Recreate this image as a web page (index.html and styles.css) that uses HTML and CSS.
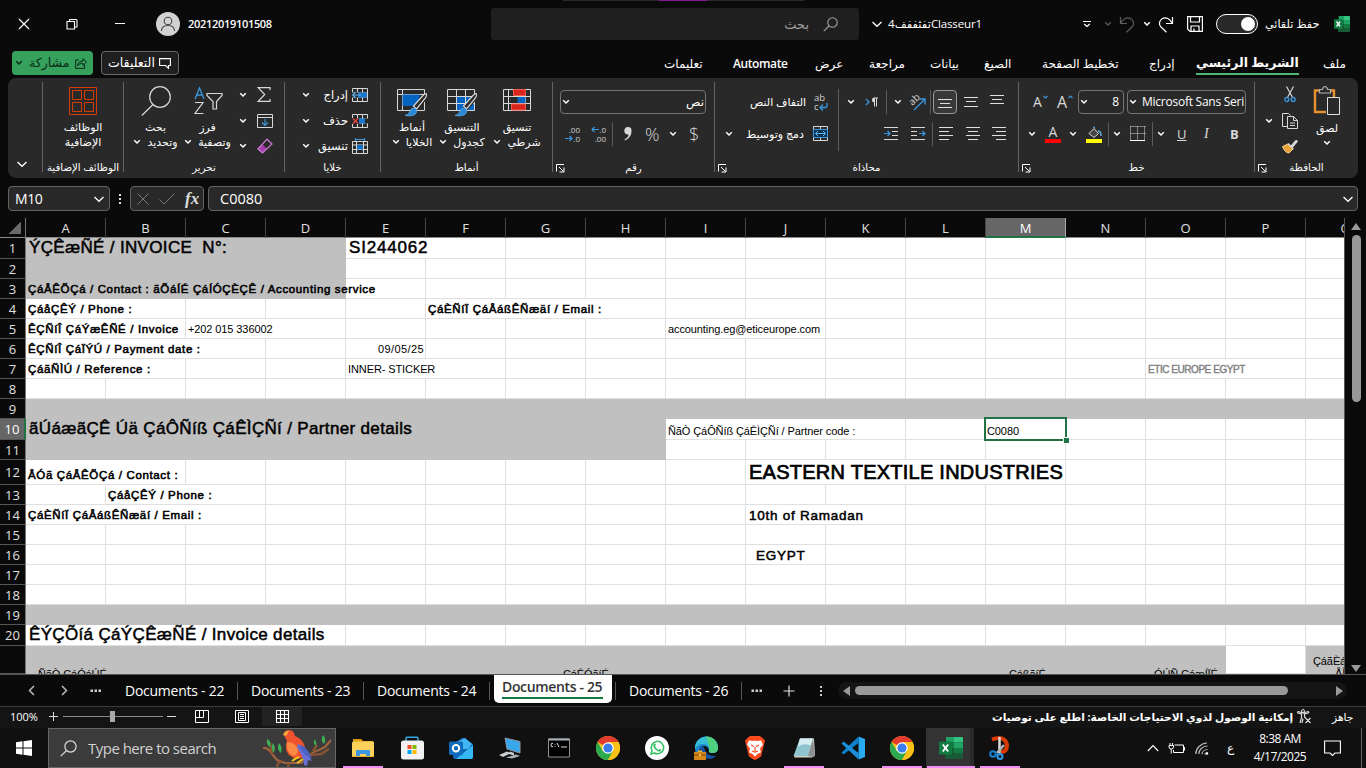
FILE: index.html
```html
<!DOCTYPE html>
<html lang="ar">
<head>
<meta charset="utf-8">
<title>Classeur1</title>
<link rel="stylesheet" href="styles.css">
</head>
<body>
<svg class="defs" width="0" height="0">
  <symbol id="chev" viewBox="0 0 8 6"><path d="M1.2 1.3 4 4 6.800 1.300" fill="none" stroke="currentColor" stroke-width="1.5"/></symbol>
  <symbol id="chevL" viewBox="0 0 12 8"><path d="M1.500 2 6 6.300 10.500 2" fill="none" stroke="currentColor" stroke-width="1.300"/></symbol>
  <symbol id="launch" viewBox="0 0 9 9"><path d="M.5 7.500V.5H8M3 3l4.500 4.500M8 3.500V8H3.500" fill="none" stroke="#fff"/></symbol>
  <symbol id="chrome" viewBox="0 0 24 24"><circle cx="12" cy="12" r="12" fill="#fbc116"/><path d="M12 12 1.600 6A12 12 0 0 1 22.400 6H12z" fill="#e33b2e"/><path d="M1.600 6 6.800 15 12 12 17.200 15 12 24A12 12 0 0 1 1.600 6z" fill="#2da94f"/><path d="M12 6H22.400A12 12 0 0 1 12 24L17.200 15z" fill="#fbc116"/><circle cx="12" cy="12" r="5.800" fill="#fff"/><circle cx="12" cy="12" r="4.600" fill="#3b7ded"/></symbol>
  <symbol id="xl" viewBox="0 0 24 22"><path d="M7 0h9v5.500H7z" fill="#21a366"/><path d="M15 0h8q1 0 1 1v4.500h-9z" fill="#33c481"/><path d="M6 5.500h9V11H6z" fill="#107c41"/><path d="M15 5.500h9V11h-9z" fill="#21a366"/><path d="M6 11h9v5.500H6z" fill="#185c37"/><path d="M15 11h9v5.500h-9z" fill="#107c41"/><path d="M6 16.500h18V21q0 1-1 1H7q-1 0-1-1z" fill="#185c37"/><rect y="4.500" width="13" height="13" rx="1" fill="#107c41"/><path d="M3.800 7.500 9.200 14.500M9.200 7.500 3.800 14.500" stroke="#fff" stroke-width="1.900"/></symbol>
  <symbol id="grid5" viewBox="0 0 16 14"><path d="M.5.5h15v13H.5zM.5 5h15M.5 9h15M5.500.5v13M10.500.5v13" fill="none" stroke="#d8d8d8"/></symbol>
  <symbol id="brush" viewBox="0 0 30 32"><path d="M29 11.500 17.500 24.500" stroke="#292929" stroke-width="5"/><path d="M29 8.500q1.500 1.500-1 5L19.500 24 16.500 21 26 10.500q2-2 3-2z" fill="#292929" stroke="#d8d8d8" stroke-width="1.200"/><path d="M8 30.500q4-.5 5-4.500 1-3.500 4.500-3 3 1.500 2 4.500-2 4.500-11.500 3z" fill="#2b88d8" stroke="#5aa9e6" stroke-width=".8"/></symbol>
</svg>

<header class="titlebar">
  <div class="title-strip"></div>
  <svg width="12" height="12" viewBox="0 0 12 12"><path d="M1 1l10 10M11 1 1 11" stroke="#fff" stroke-width="1.100"/></svg>
  <svg width="12" height="12" viewBox="0 0 12 12"><path d="M1 3.500h7.500V11H1zM3.500 3V1.500h6.500q1 0 1 1V9H9" fill="none" stroke="#fff" stroke-width="1.100"/></svg>
  <svg width="12" height="12" viewBox="0 0 12 12"><path d="M1 5.500h10" stroke="#fff"/></svg>
  <svg width="24" height="24" viewBox="0 0 24 24"><circle cx="12" cy="12" r="12" fill="#d2d2d2"/><circle cx="12" cy="9" r="3.800" fill="none" stroke="#444" stroke-width="1.100"/><path d="M5.500 19q0-5.500 6.500-5.500T18.500 19" fill="none" stroke="#444" stroke-width="1.100"/></svg>
  <span class="user">20212019101508</span>
  <div class="search"><span dir="rtl">بحث</span><svg width="15" height="15" viewBox="0 0 15 15"><circle cx="9.500" cy="5.500" r="4.700" fill="none" stroke="#a0a0a0" stroke-width="1.100"/><path d="M6 9 .8 14.200" stroke="#a0a0a0" stroke-width="1.100"/></svg></div>
  <svg width="12" height="8"><use href="#chevL"/></svg>
  <span class="doc" dir="rtl">Classeur1تفثففف4</span>
  <svg width="8" height="8" viewBox="0 0 8 8"><path d="M0 1.500h8" stroke="#fff"/><path d="M1.200 4 4 6.500 6.800 4" fill="none" stroke="#fff" stroke-width="1.300"/></svg>
  <svg class="dim" width="8" height="6"><use href="#chev"/></svg>
  <svg width="16" height="17" viewBox="0 0 16 17"><path d="M1.500 1v6.500H8M1.700 7.200C4 3 8 .5 11.500 2.500s4 6 1.500 8.500L7.500 16.300" fill="none" stroke="#5c5c5c" stroke-width="1.200"/></svg>
  <svg width="8" height="6"><use href="#chev"/></svg>
  <svg width="16" height="17" viewBox="0 0 16 17"><path d="M14.500 1v6.500H8M14.300 7.200C12 3 8 .5 4.500 2.500s-4 6-1.500 8.500l5.500 5.300" fill="none" stroke="#fff" stroke-width="1.200"/></svg>
  <svg width="16" height="16" viewBox="0 0 16 16"><path d="M.6.6h14.800v14.800H3L.6 13zM3.500.6v5.400h9V.6M4 15v-5h8v5M7 12.500v3" fill="none" stroke="#fff" stroke-width="1.200"/></svg>
  <span class="toggle"><b></b></span>
  <span class="autosave" dir="rtl">حفظ تلقائي</span>
  <svg width="16" height="16" viewBox="0 0 24 22" preserveAspectRatio="none"><use href="#xl" width="24" height="22"/></svg>
</header>

<nav class="tabs">
  <span class="share"><svg width="8" height="6"><use href="#chev"/></svg><span dir="rtl">مشاركة</span><svg width="12" height="11" viewBox="0 0 12 11"><path d="M4 2H.6v8.400h9V7M2.500 8C3 4.500 5 3 8 3V.7l3.400 3.500L8 7.500V5.300C5.500 5.300 4 6 2.500 8z" fill="none" stroke="#0b2a18"/></svg></span>
  <span class="comments"><span dir="rtl">التعليقات</span><svg width="12" height="11" viewBox="0 0 12 11"><path d="M.6.6h10.800v6.900H9.500v2.700L6.500 7.500H.6z" fill="none" stroke="#fff" stroke-width="1.100"/></svg></span>
  <a dir="rtl">تعليمات</a><a class="latin">Automate</a><a dir="rtl">عرض</a><a dir="rtl">مراجعة</a><a dir="rtl">بيانات</a><a dir="rtl">الصيغ</a><a dir="rtl">تخطيط الصفحة</a><a dir="rtl">إدراج</a><a class="on" dir="rtl">الشريط الرئيسي</a><a dir="rtl">ملف</a>
</nav>

<section class="ribbon">
  <div class="group g-collapse"><svg width="12" height="8"><use href="#chevL"/></svg></div>

  <div class="group g-addins">
    <div class="tall">
      <svg width="28" height="32" viewBox="0 0 28 32"><path d="M.5 2.500h27v27H.5zM3.500 5.500h9v9h-9zM15.500 5.500h9v9h-9zM3.500 17.500h9v9h-9zM15.500 17.500h9v9h-9z" fill="none" stroke="#d83b01"/></svg>
      <span dir="rtl">الوظائف</span><span dir="rtl">الإضافية</span>
    </div>
    <div class="label" dir="rtl">الوظائف الإضافية</div>
  </div>

  <div class="group g-edit">
    <div class="body">
      <div class="tall">
        <svg width="30" height="32" viewBox="0 0 30 32"><circle cx="19" cy="12" r="10.300" fill="none" stroke="#d8d8d8" stroke-width="1.200"/><path d="M12 19.500.8 30.500" stroke="#d8d8d8" stroke-width="1.200"/></svg>
        <span dir="rtl">بحث</span><span class="menu"><svg width="8" height="6"><use href="#chev"/></svg><b dir="rtl">وتحديد</b></span>
      </div>
      <div class="tall sort">
        <svg width="30" height="32" viewBox="0 0 30 32"><path d="M2 14 6.500 3 11 14M3.500 10h6" fill="none" stroke="#3a96dd" stroke-width="1.300"/><path d="M2 17.500h8L2 28.500h8.500" fill="none" stroke="#d8d8d8" stroke-width="1.200"/><path d="M14 8.500h15v2l-5.500 6v7.500h-3.500v-7.500l-6-6z" fill="none" stroke="#d8d8d8" stroke-width="1.200"/></svg>
        <span dir="rtl">فرز</span><span class="menu"><svg width="8" height="6"><use href="#chev"/></svg><b dir="rtl">وتصفية</b></span>
      </div>
      <div class="three">
        <div><svg width="8" height="6"><use href="#chev"/></svg><svg width="14" height="15" viewBox="0 0 14 15"><path d="M13 3V.7H1.200l6.500 6.800-6.500 6.800H13V12" fill="none" stroke="#d8d8d8" stroke-width="1.200"/></svg></div>
        <div><svg width="8" height="6"><use href="#chev"/></svg><svg width="16" height="14" viewBox="0 0 16 14"><path d="M.5.5h15v13H.5zM.5 3.500h15" fill="none" stroke="#d8d8d8"/><path d="M8 5v6.500M5 8.500l3 3 3-3" fill="none" stroke="#3a96dd" stroke-width="1.200"/></svg></div>
        <div><svg width="8" height="6"><use href="#chev"/></svg><svg width="16" height="16" viewBox="0 0 16 16"><path d="M5.500 6.500 9.500 10.500 5.500 15 .9 11z" fill="#a43cb0"/><path d="M10 1.200 15 6 5.500 15 .9 11z" fill="none" stroke="#c77dd0" stroke-width="1.200"/></svg></div>
      </div>
    </div>
    <div class="label" dir="rtl">تحرير</div>
  </div>

  <div class="group g-cells">
    <div class="body three">
      <div><svg width="8" height="6"><use href="#chev"/></svg><span dir="rtl">إدراج</span><svg width="16" height="14" viewBox="0 0 16 14"><use href="#grid5"/><path d="M5 4.500h10v5H5z" fill="#1878d0"/><path d="M0 4.500h6v5H0z" fill="#292929"/><path d="M9 7H.8M3.500 4 .8 7l2.700 3" fill="none" stroke="#5fb2ec" stroke-width="1.200"/></svg></div>
      <div><svg width="8" height="6"><use href="#chev"/></svg><span dir="rtl">حذف</span><svg width="16" height="14" viewBox="0 0 16 14"><use href="#grid5"/><path d="M0 4h7v6H0zM13 4.500h3v5h-3z" fill="#292929"/><path d="M7 4.500h6v5H7z" fill="#1878d0"/><path d="M1 4.500l5 5M6 4.500l-5 5" stroke="#e8453c" stroke-width="1.300"/></svg></div>
      <div><svg width="8" height="6"><use href="#chev"/></svg><span dir="rtl">تنسيق</span><svg width="16" height="16" viewBox="0 0 16 16"><path d="M.5 3.500h15v12H.5zM.5 7h15M.5 11.500h15M4.500 3.500v12M11.500 3.500v12" fill="none" stroke="#d8d8d8"/><path d="M5 7h6v4.500H5z" fill="#0f6cc4"/><path d="M3.500 1.500h9M3.500 0v3M12.500 0v3" stroke="#3a96dd"/></svg></div>
    </div>
    <div class="label" dir="rtl">خلايا</div>
  </div>

  <div class="group g-styles">
    <div class="body">
      <div class="tall">
        <svg width="30" height="32" viewBox="0 0 30 32"><path d="M.5 4.500h27v21H.5zM.5 9.500h27M5.500 4.500v21" fill="none" stroke="#d8d8d8"/><path d="M5.500 9.500h17V21h-17z" fill="#0563c1"/><use href="#brush" width="30" height="32"/></svg>
        <span dir="rtl">أنماط</span><span class="menu"><svg width="8" height="6"><use href="#chev"/></svg><b dir="rtl">الخلايا</b></span>
      </div>
      <div class="tall t-format">
        <svg width="30" height="32" viewBox="0 0 30 32"><path d="M9.500 11.500h18v14h-18z" fill="#0563c1"/><path d="M.5 4.500h27v21H.5zM.5 11.500h27M.5 18.500h27M9.500 4.500v21M18.500 4.500v21" fill="none" stroke="#d8d8d8"/><use href="#brush" width="30" height="32"/></svg>
        <span dir="rtl">التنسيق</span><span class="menu"><svg width="8" height="6"><use href="#chev"/></svg><b dir="rtl">كجدول</b></span>
      </div>
      <div class="tall t-cond">
        <svg width="28" height="32" viewBox="0 0 28 32"><path d="M.5 4.500h27v21H.5zM.5 11.500h27M.5 18.500h27M5.500 4.500v21M22.500 4.500v21" fill="none" stroke="#d8d8d8"/><path d="M10.500 4.500h12v6h-12zM8.500 19h14v6h-14z" fill="#d9261c" stroke="#f0564c"/><path d="M6 12h8v6H6z" fill="#292929"/><path d="M14.500 12h8v6h-8z" fill="#0563c1"/></svg>
        <span dir="rtl">تنسيق</span><span class="menu"><svg width="8" height="6"><use href="#chev"/></svg><b dir="rtl">شرطي</b></span>
      </div>
    </div>
    <div class="label" dir="rtl">أنماط</div>
  </div>

  <div class="group g-number">
    <div class="body two">
      <div><span class="box num-format"><svg width="8" height="6"><use href="#chev"/></svg><span dir="rtl">نص</span></span></div>
      <div class="r2">
        <span class="dec"><em>.00</em><em class="arr"><svg width="8" height="7" viewBox="0 0 8 7"><path d="M0 3.500h7M4.500 1 7 3.500 4.500 6" fill="none" stroke="#3a96dd" stroke-width="1.200"/></svg>.0</em></span>
        <span class="dec"><em class="arr"><svg width="8" height="7" viewBox="0 0 8 7"><path d="M8 3.500H1M3.500 1 1 3.500 3.500 6" fill="none" stroke="#3a96dd" stroke-width="1.200"/></svg>.0</em><em>.00</em></span>
        <i class="sep"></i>
        <svg width="8" height="14" viewBox="0 0 8 14"><path d="M4 0a3.700 3.700 0 0 1 3.500 4C7.500 9 4.500 12 .8 13.500L.5 12.500C3 11 4.500 9.500 4.500 7.500 2 8 .3 6 .3 4A3.600 3.600 0 0 1 4 0z" fill="#d8d8d8"/></svg>
        <span class="sym">%</span>
        <svg width="8" height="6"><use href="#chev"/></svg>
        <span class="sym">$</span>
      </div>
    </div>
    <div class="label" dir="rtl">رقم</div><svg class="launcher" width="9" height="9"><use href="#launch"/></svg>
  </div>

  <div class="group g-align">
    <div class="body two">
      <div class="r1">
        <span dir="rtl">التفاف النص</span>
        <span class="wrap-ic"><em>ab</em><em>c<svg width="9" height="8" viewBox="0 0 9 8"><path d="M8 0v2.500Q8 4.500 6 4.500H1.500M4 1.500l-3 3 3 3" fill="none" stroke="#3a96dd" stroke-width="1.300"/></svg></em></span>
        <i class="sep long"></i>
        <svg width="8" height="6"><use href="#chev"/></svg>
        <svg width="13" height="10" viewBox="0 0 13 10"><path d="M1 2l3 3-3 3" fill="none" stroke="#3a96dd" stroke-width="1.300"/><path d="M9 1h4M9.500 1v8.500M11.500 1v8.500" fill="none" stroke="#d8d8d8"/><path d="M9.500.5a2.500 2.500 0 0 0 0 5z" fill="#d8d8d8"/></svg>
        <i class="sep"></i>
        <svg width="8" height="6"><use href="#chev"/></svg>
        <span class="orient"><em>ab</em><svg width="13" height="13" viewBox="0 0 13 13"><path d="M1 12 11.500 1.500M6.500 1H12v5.500" fill="none" stroke="#3a96dd" stroke-width="1.300"/></svg></span>
        <i class="sep"></i>
        <span class="sel"><svg width="14" height="14" viewBox="0 0 14 14"><path d="M0 4.500h14M2 8.500h10M0 12.500h14" stroke="#e0e0e0"/></svg></span>
        <svg width="14" height="14" viewBox="0 0 14 14"><path d="M0 2.500h14M2 6.500h10M0 11.500h14" stroke="#e0e0e0"/></svg>
        <svg width="14" height="14" viewBox="0 0 14 14"><path d="M0 .5h14M2 4.500h10M0 8.500h14" stroke="#e0e0e0"/></svg>
      </div>
      <div class="r2">
        <svg width="8" height="6"><use href="#chev"/></svg>
        <span dir="rtl">دمج وتوسيط</span>
        <svg width="16" height="16" viewBox="0 0 16 16"><path d="M.5.5h14v14H.5zM.5 3.500h14M.5 11.500h14M7.500.5v3M7.500 11.500v3" fill="none" stroke="#d8d8d8"/><path d="M.5 3.500h14v8H.5z" fill="#0d3557" stroke="#3a96dd"/><path d="M2.500 7.500h10M5 5 2.500 7.500 5 10M10 5l2.500 2.500L10 10" fill="none" stroke="#5fb2ec"/></svg>
        <svg width="14" height="14" viewBox="0 0 14 14"><path d="M0 .5h14M8 4.500h6M8 8.500h6M0 12.500h14" stroke="#d8d8d8"/><path d="M0 6.500h6M3.500 4 6 6.500 3.500 9" fill="none" stroke="#3a96dd" stroke-width="1.200"/></svg>
        <svg width="14" height="14" viewBox="0 0 14 14"><path d="M0 .5h14M0 4.500h6M0 8.500h6M0 12.500h14" stroke="#d8d8d8"/><path d="M8 6.500h6M11.500 4 14 6.500 11.500 9" fill="none" stroke="#3a96dd" stroke-width="1.200"/></svg>
        <i class="sep"></i>
        <svg width="14" height="14" viewBox="0 0 14 14"><path d="M0 .5h14M0 4.500h10M0 8.500h14M0 12.500h10" stroke="#e0e0e0"/></svg>
        <svg width="14" height="14" viewBox="0 0 14 14"><path d="M0 .5h14M2 4.500h10M0 8.500h14M2 12.500h10" stroke="#e0e0e0"/></svg>
        <svg width="14" height="14" viewBox="0 0 14 14"><path d="M0 .5h14M4 4.500h10M0 8.500h14M4 12.500h10" stroke="#e0e0e0"/></svg>
      </div>
    </div>
    <div class="label" dir="rtl">محاذاة</div><svg class="launcher" width="9" height="9"><use href="#launch"/></svg>
  </div>

  <div class="group g-font">
    <div class="body two">
      <div class="r1">
        <span class="fa sm">A<svg width="5" height="4" viewBox="0 0 5 4"><path d="M.5 1l2 2 2-2" fill="none" stroke="#3a96dd" stroke-width="1.200"/></svg></span>
        <span class="fa">A<svg width="5" height="4" viewBox="0 0 5 4"><path d="M.5 3l2-2 2 2" fill="none" stroke="#3a96dd" stroke-width="1.200"/></svg></span>
        <span class="box"><svg width="8" height="6"><use href="#chev"/></svg><span>8</span></span>
        <span class="box fname"><svg width="8" height="6"><use href="#chev"/></svg><span>Microsoft Sans Seri</span></span>
      </div>
      <div class="r2">
        <svg width="8" height="6"><use href="#chev"/></svg>
        <span class="fcol">A</span>
        <svg width="8" height="6"><use href="#chev"/></svg>
        <svg width="17" height="17" viewBox="0 0 17 17"><path d="M3 7.500 8 2.500l4.500 5L8 11.500z" fill="#444" stroke="#d8d8d8"/><path d="M8 2.500V.5M12 5q3 0 3 5" fill="none" stroke="#5fa8dc" stroke-width="1.600"/><path d="M0 13h16v4H0z" fill="#ff0"/></svg>
        <i class="sep"></i>
        <svg width="8" height="6"><use href="#chev"/></svg>
        <svg width="16" height="16" viewBox="0 0 16 16"><path d="M.5.5h15M.5 7.500h15M.5.5v14M7.500.5v14M14.500.5v14" fill="none" stroke="#d8d8d8" stroke-dasharray="1 1"/><path d="M0 14.500h15" stroke="#fff"/></svg>
        <i class="sep"></i>
        <svg width="8" height="6"><use href="#chev"/></svg>
        <span class="fmt un">U</span><span class="fmt it">I</span><span class="fmt bo">B</span>
      </div>
    </div>
    <div class="label" dir="rtl">خط</div><svg class="launcher" width="9" height="9"><use href="#launch"/></svg>
  </div>

  <div class="group g-clip">
    <div class="body">
      <div class="three">
        <div><svg class="cut" width="12" height="17" viewBox="0 0 12 17"><path d="M2.500.5 8.300 11M9.500.5 3.700 11" stroke="#d8d8d8" stroke-width="1.200"/><circle cx="2.800" cy="13.500" r="2" fill="none" stroke="#3a96dd" stroke-width="1.300"/><circle cx="9.200" cy="13.500" r="2" fill="none" stroke="#3a96dd" stroke-width="1.300"/></svg></div>
        <div><svg width="8" height="6"><use href="#chev"/></svg><svg width="16" height="16" viewBox="0 0 16 16"><path d="M5.500 13.500h-5V.5h6l2 2M5.500 3.500h6l4 4v8h-10zM11.500 3.500v4h4M8 10h5M8 12.500h5" fill="none" stroke="#d8d8d8"/></svg></div>
        <div><svg width="16" height="16" viewBox="0 0 16 16"><path d="M.5 8.500 6 6l5 5-4 4q-4 0-6.500-6.500z" fill="#e8a33a" stroke="#f5d08a"/><path d="M6 5.500l5.500 5.500M9 8.500l4.500-5.500q1.500-1 1.500 0.500L10 9.500" fill="none" stroke="#d8d8d8" stroke-width="1.400"/></svg></div>
      </div>
      <div class="tall">
        <svg width="28" height="32" viewBox="0 0 28 32"><path d="M7 5.500H2v21.500h11M17 5.500h4V12" fill="none" stroke="#e8912d" stroke-width="2.400"/><path d="M6.500 8V4.500h3q.5-3 2.500-3t2.500 3h3V8z" fill="#292929" stroke="#b0b0b0" stroke-width="1.200"/><path d="M14.500 12.500h12v17h-12z" fill="#292929" stroke="#e0e0e0"/></svg>
        <span dir="rtl">لصق</span><svg width="8" height="6"><use href="#chev"/></svg>
      </div>
    </div>
    <div class="label" dir="rtl">الحافظة</div><svg class="launcher" width="9" height="9"><use href="#launch"/></svg>
  </div>
</section>

<section class="formula">
  <div class="fbox name"><span>M10</span><svg width="12" height="8"><use href="#chevL"/></svg></div>
  <svg class="dots" width="4" height="12" viewBox="0 0 4 12"><path d="M1 1h2v2H1zM1 5h2v2H1zM1 9h2v2H1z" fill="#ddd"/></svg>
  <div class="fbox tools"><svg width="12" height="12" viewBox="0 0 12 12"><path d="M.5.5l11 11M11.500.5l-11 11" stroke="#777"/></svg><svg width="16" height="12" viewBox="0 0 16 12"><path d="M.5 6.500 5 11 15.500.5" fill="none" stroke="#777"/></svg><span>fx</span></div>
  <div class="fbox value"><span>C0080</span><svg width="12" height="8"><use href="#chevL"/></svg></div>
</section>

<main class="work">
  <div class="sheet">
    <div class="cols"><i class="corner"></i><b>A</b><b>B</b><b>C</b><b>D</b><b>E</b><b>F</b><b>G</b><b>H</b><b>I</b><b>J</b><b>K</b><b>L</b><b class="cur">M</b><b>N</b><b>O</b><b>P</b><b>Q</b></div>
    <div class="row h21"><b>1</b><p class="c1-4 grey big t1">ÝÇÊæÑÉ / INVOICE&nbsp; N°:</p><p class="c5-6 big t2">SI244062</p></div>
    <div class="row"><b>2</b><p class="c1-4 grey"></p></div>
    <div class="row"><b>3</b><p class="c1-4 grey bold over">ÇáÅÊÕÇá / Contact : ãÕáÍÉ ÇáÍÓÇÈÇÊ / Accounting service</p></div>
    <div class="row"><b>4</b><p class="c1-2 bold">ÇáåÇÊÝ / Phone :</p><p class="c6-8 bold">ÇáÈÑíÏ ÇáÅáßÊÑæäí / Email :</p></div>
    <div class="row"><b>5</b><p class="c1-2 bold">ÊÇÑíÎ ÇáÝæÊÑÉ / Invoice</p><p class="c3-4">+202 015 336002</p><p class="c9-10">accounting.eg@eticeurope.com</p></div>
    <div class="row"><b>6</b><p class="c1-3 bold">ÊÇÑíÎ ÇáÏÝÚ / Payment date :</p><p class="c5 right">09/05/25</p></div>
    <div class="row"><b>7</b><p class="c1-2 bold">ÇáãÑÌÚ / Reference :</p><p class="c5-6">INNER- STICKER</p><p class="c15-16 etic">ETIC EUROPE EGYPT</p></div>
    <div class="row"><b>8</b></div>
    <div class="row full"><b>9</b></div>
    <div class="row h21"><b class="cur">10</b><p class="c1-8 grey big">ãÚáæãÇÊ Úä ÇáÔÑíß ÇáÊÌÇÑí / Partner details</p><p class="c9-11 code">ÑãÒ ÇáÔÑíß ÇáÊÌÇÑí / Partner code :</p><p class="c13 code active">C0080</p></div>
    <div class="row"><b>11</b><p class="c1-8 grey"></p></div>
    <div class="row h25"><b>12</b><p class="c1-2 bold low">ÅÓã ÇáÅÊÕÇá / Contact :</p><p class="c10-13 huge">EASTERN TEXTILE INDUSTRIES</p></div>
    <div class="row"><b>13</b><p class="c2-3 bold">ÇáåÇÊÝ / Phone :</p></div>
    <div class="row"><b>14</b><p class="c1-3 bold">ÇáÈÑíÏ ÇáÅáßÊÑæäí / Email :</p><p class="c10-11 mid">10th of Ramadan</p></div>
    <div class="row"><b>15</b></div>
    <div class="row"><b>16</b><p class="c10 mid egypt">EGYPT</p></div>
    <div class="row"><b>17</b></div>
    <div class="row"><b>18</b></div>
    <div class="row full"><b>19</b></div>
    <div class="row h21"><b>20</b><p class="c1-4 big">ÊÝÇÕíá ÇáÝÇÊæÑÉ / Invoice details</p></div>
    <div class="row last"><b></b><p class="c1-15 grey heads"><span>ÑãÒ ÇáÓáÚÉ</span><span>ÇáÊÓãíÉ</span><span>ÇáßãíÉ</span><span>ÓÚÑ ÇáæÍÏÉ</span></p><p class="c17 grey qhead"><span>ÇáãÈáÛ</span><span>ÅÌãÇáí</span></p></div>
  </div>
  <div class="vscroll"><i class="up"></i><i class="thumb"></i><i class="down"></i></div>
</main>

<section class="sheets">
  <svg width="7" height="11" viewBox="0 0 7 11"><path d="M6 1 1.500 5.500 6 10" fill="none" stroke="#bbb" stroke-width="1.500"/></svg>
  <svg width="7" height="11" viewBox="0 0 7 11"><path d="M1 1l4.500 4.500L1 10" fill="none" stroke="#bbb" stroke-width="1.500"/></svg>
  <svg width="12" height="4" viewBox="0 0 12 4"><path d="M.5.5h2.500v2.500H.5zM4.500.5H7v2.500H4.500zM8.500.5H11v2.500H8.500z" fill="#ccc"/></svg>
  <span>Documents - 22</span><i></i><span>Documents - 23</span><i></i><span>Documents - 24</span><i></i>
  <span class="active-tab"><u>Documents - 25</u></span><i></i><span>Documents - 26</span><i></i>
  <svg width="12" height="4" viewBox="0 0 12 4"><path d="M.5.5h2.500v2.500H.5zM4.500.5H7v2.500H4.500zM8.500.5H11v2.500H8.500z" fill="#ccc"/></svg>
  <svg width="12" height="12" viewBox="0 0 12 12"><path d="M6 .5v11M.5 6h11" stroke="#ddd" stroke-width="1.200"/></svg>
  <svg width="4" height="12" viewBox="0 0 4 12"><path d="M1 1h2v2H1zM1 5h2v2H1zM1 9h2v2H1z" fill="#ccc"/></svg>
  <div class="hscroll"><i class="left"></i><i class="hthumb"></i><i class="rightarr"></i></div>
</section>

<section class="status">
  <span class="zoomv">100%</span>
  <svg width="9" height="9" viewBox="0 0 9 9"><path d="M4.500 0v9M0 4.500h9" stroke="#ddd"/></svg>
  <span class="slider"><b></b></span>
  <svg width="9" height="9" viewBox="0 0 9 9"><path d="M0 4.500h9" stroke="#ddd"/></svg>
  <svg width="14" height="13" viewBox="0 0 14 13"><path d="M.5.5h13v12H.5zM8.500.5v7M.5 7.500h8M4.500.5v7" fill="none" stroke="#fff"/></svg>
  <svg width="14" height="13" viewBox="0 0 14 13"><path d="M.5.5h13v12H.5zM3.500 2.500h7v8h-7zM5 4.500h4M5 6.500h4M5 8.500h4" fill="none" stroke="#fff"/></svg>
  <span class="view-on"><svg width="13" height="13" viewBox="0 0 13 13"><path d="M.5.5h12v12H.5zM.5 4.500h12M.5 8.500h12M4.500.5v12M8.500.5v12" fill="none" stroke="#fff" stroke-width="1.100"/></svg></span>
  <span class="a11y" dir="rtl">إمكانية الوصول لذوي الاحتياجات الخاصة: اطلع على توصيات</span>
  <svg width="15" height="15" viewBox="0 0 15 15"><circle cx="6" cy="2" r="1.500" fill="none" stroke="#ddd"/><path d="M.8 4 4.500 5v3.500L3 14M11.500 4 7.500 5v3l1.500 1.500M5 14l1-4.500M.8 4q-1-2 2-1L6 4l3.500-1q3-1 2 1M8.500 9l5 5M13.500 9l-5 5" fill="none" stroke="#ddd" stroke-width="1.200"/></svg>
  <span class="ready" dir="rtl">جاهز</span>
</section>

<footer class="taskbar">
  <div class="start"><svg width="16" height="16" viewBox="0 0 16 16"><path d="M0 2.300 6.500 1.300V7.500H0zM7.500 1.200 16 0v7.500H7.500zM0 8.500h6.500v6.200L0 13.700zM7.500 8.500H16V16l-8.500-1.200z" fill="#fff"/></svg></div>
  <div class="tsearch">
    <svg width="17" height="17" viewBox="0 0 17 17"><circle cx="10.500" cy="6.500" r="5.600" fill="none" stroke="#ddd" stroke-width="1.200"/><path d="M6.500 10.500.8 16.200" stroke="#ddd" stroke-width="1.200"/></svg>
    <span>Type here to search</span>
    <svg class="bird" width="70" height="38" viewBox="0 0 70 38"><path d="M0 19q5-1 9 6l5 6 8 3 16 0 8-7q3-4 10-6l6-3 6-7" fill="none" stroke="#a0633f" stroke-width="2.200"/><path d="M14 38q0-4 5-6M26 34l-1 4M46 26l12-1 8-5M9 25 7 14M50 22l4-6" fill="none" stroke="#8a5233" stroke-width="2.400"/><path d="M4 10q5 2 3 8-4-2-3-8zM10 14q3 4 1 10-4-5-1-10zM16 14q4 4 2 10-5-4-2-10zM60 6q4 4 1 9-4-4-1-9zM52 10q2 4 1 7-4-3-1-7z" fill="#3cad52"/><path d="M21 6q0-5 5-5 5 0 6 6 8 3 10 11 1 7-3 11-7 2-13-3-5-6-2-14z" fill="#f0522d"/><path d="M24 13q-2 9 6 14 5 0 5-7-3-7-11-7z" fill="#fb8a44"/><path d="M20 6q1-4 6-4-2 4-3 5z" fill="#fba83e"/><path d="M35 15q7 2 9 8l5 9-4-1-1 6-3-1q0-8-7-17z" fill="#6a6fd4"/><path d="M38 16q6 3 8 8l3 5q-9-2-12-11z" fill="#4a62c4"/><path d="M29 32q4-3 7-4M34 34l6-4" stroke="#f5c518" stroke-width="2"/></svg>
  </div>
  <div class="apps">
    <div class="run"><svg width="24" height="24" viewBox="0 0 24 24"><path d="M2 3h8l2 2h10v4H2z" fill="#e09c12"/><path d="M2 5.500h20q1 0 1 1v14H1v-14z" fill="#fcd15b"/><path d="M5 21v-6q0-1 1-1h12q1 0 1 1v6h-4v-3H9v3z" fill="#3c96e0"/><path d="M1 20.500h22" stroke="#e8ad28"/></svg></div>
    <div><svg width="24" height="24" viewBox="0 0 24 24"><path d="M6 7V2q0-.8 1-.8h10q1 0 1 .8v5" fill="none" stroke="#35a8e8" stroke-width="1.500"/><rect x="1" y="4.500" width="23" height="19" rx="2.500" fill="#f2f2f2"/><path d="M7.500 9h4v4h-4z" fill="#f25022"/><path d="M12.500 9h4v4h-4z" fill="#7fba00"/><path d="M7.500 14h4v4h-4z" fill="#00a4ef"/><path d="M12.500 14h4v4h-4z" fill="#ffb900"/></svg></div>
    <div><svg width="24" height="24" viewBox="0 0 24 24"><path d="M4 8 14 1.500 24 8v13q0 2-2 2H6q-2 0-2-2z" fill="#1266b8"/><path d="M8 6l8-4 7 6-4 5H8z" fill="#42b6f2"/><path d="M24 9v12q0 2-2 2H7z" fill="#35b8f1"/><rect y="5.500" width="14" height="13.500" rx="1.500" fill="#0f6cbd"/><circle cx="7" cy="12.200" r="3.200" fill="none" stroke="#fff" stroke-width="2"/></svg></div>
    <div><svg width="24" height="24" viewBox="0 0 24 24"><path d="M7 2l15 3.500v11.500L9 13z" fill="#39a7ee" stroke="#8a959e"/><path d="M12 15.500l4 1.500v2.500l-5-1.500zM1 19l8-3.500 4 1.500-8 4z" fill="#c9ced2"/><path d="M8 21.500l10-3 4 1.500-8 2.500z" fill="#aeb4b9"/></svg></div>
    <div><svg width="24" height="24" viewBox="0 0 24 24"><path d="M1.500 3h21v18h-21z" fill="#000" stroke="#8c9299"/><path d="M1.500 3.500h21" stroke="#aab0b5" stroke-width="2"/><path d="M6 7.500q-2-1-2 1.500t2 1.500M8 8v.8M8 10v.8M10 7l2 4M14 11h6" fill="none" stroke="#ddd"/></svg></div>
    <div><svg width="24" height="24"><use href="#chrome"/></svg></div>
    <div><svg width="24" height="24" viewBox="0 0 24 24"><circle cx="12" cy="12" r="12" fill="#fff"/><path d="M6 18l1-3.500a6.200 6.200 0 1 1 2.500 2.500z" fill="none" stroke="#2fc160" stroke-width="1.500"/><path d="M9.500 8.500q-1 2 1.500 4.500t4.500 1.500M9 9.500 10.500 8M14 15l1.700-1.500" fill="none" stroke="#2fc160" stroke-width="1.700"/></svg></div>
    <div><svg width="24" height="24" viewBox="0 0 24 24"><path d="M1 12A11.500 11.500 0 0 1 24 12q0 5-6 5-4-.5-3-3-1-4-5-4-5 0-5 6-1 5 4 7-8-2-8-11z" fill="#1e86cc"/><path d="M1 12A11.500 11.500 0 0 1 24 12q0 5-6 5-4-.5-3-3Q15 8 9 8q-5 0-8 5z" fill="#35bdd8"/><path d="M12 .5A11.500 11.500 0 0 1 24 12q0 5-6 5-4-.5-3-3 1-1 0-4z" fill="#57d467" opacity=".8"/><path d="M6 11q-3 11 10 12 4-.5 6-3-10 1-12-9-2-1-4 0z" fill="#1552a0"/><path d="M0 16h12v8H0z" fill="#d3861c"/><path d="M0 19h12" stroke="#7a4a0c"/><path d="M4 16v-1.500h4V16M5 18h2v2.500H5z" fill="#f3b33d"/></svg></div>
    <div><svg width="24" height="24" viewBox="0 0 24 24"><path d="M7 0h10l3 2.500 2 2-1 4-3 12q-4 3-6 3.500-2-.5-6-3.500l-3-12-1-4 2-2z" fill="#fb4a1e"/><path d="M6 4.500l4 .5 2-.5 2 .5 4-.5 2 4-3 4 1 4-3 1-3 3-3-3-3-1 1-4-3-4z" fill="#fff"/><path d="M8 9l3 1.500M16 9l-3 1.500M12 11v4M9 15l3 1 3-1" fill="none" stroke="#fb4a1e" stroke-width="1.200"/></svg></div>
    <div class="run"><svg width="24" height="24" viewBox="0 0 24 24"><path d="M8 2.500h14l1 17-3 2H2z" fill="#d7d2c2"/><path d="M8 2.500h13l-5 17.500H1.500z" fill="#8ec5cf"/><path d="M8 2.500h13l-2 7q-7-3-13 1z" fill="#d6eef2"/><path d="M21 2.500 16 20l5 1 2-1z" fill="#8a8f92"/></svg></div>
    <div><svg width="24" height="24" viewBox="0 0 24 24"><path d="M17.500.5 24 3v18l-6.500 2.500z" fill="#29a9f2"/><path d="M17.500 7 2.500 18.500.5 16.500 17.500.5z" fill="#0f7fcc"/><path d="M17.500 17 2.500 5.500.5 7.500l17 16z" fill="#1a8fdc"/></svg></div>
    <div class="run"><svg width="24" height="24"><use href="#chrome"/></svg></div>
    <div class="run open"><svg width="24" height="22"><use href="#xl"/></svg></div>
    <div class="run"><svg width="24" height="24" viewBox="0 0 24 24"><path d="M4 3.500Q17-1 19 9q0 7-6 7" fill="none" stroke="#d83b01" stroke-width="4"/><path d="M11.500 1v16" stroke="#ddd" stroke-width="2.500"/><path d="M16 9 9 17" stroke="#b5b5b5" stroke-width="2.500"/><circle cx="5" cy="18" r="2.800" fill="none" stroke="#1583d8" stroke-width="2"/><circle cx="12" cy="20.500" r="2.500" fill="none" stroke="#2f9ae8" stroke-width="2"/></svg></div>
  </div>
  <div class="tray">
    <svg width="12" height="8" viewBox="0 0 12 8"><path d="M.8 7 6 1.500 11.200 7" fill="none" stroke="#fff" stroke-width="1.100"/></svg>
    <svg width="17" height="13" viewBox="0 0 17 13"><path d="M6.500 3h9v7.500h-10V8M16.500 5v3.500M1 3.500h4.500V5q0 2-2.200 2T1 5zM2 3.500V1M4.500 3.500V1M3.200 7v4.500" fill="none" stroke="#fff"/></svg>
    <svg width="14" height="13" viewBox="0 0 14 13"><path d="M.8 12A12 11 0 0 1 12 1M3.800 12A9 8 0 0 1 12.500 4M7 12.200A5.500 5 0 0 1 12.500 7.500M9.800 12.500a3 2.500 0 0 1 2.700-2" fill="none" stroke="#bbb" stroke-width="1.200"/><circle cx="12" cy="11.500" r="1.200" fill="#fff"/></svg>
    <span>ع</span>
    <div class="clock"><span>8:38 AM</span><span>4/17/2025</span></div>
    <svg width="17" height="17" viewBox="0 0 17 17"><path d="M.6 1h15.800v12H11l-2.500 2.500L6 13H.6z" fill="none" stroke="#fff" stroke-width="1.100"/></svg>
    <i></i>
  </div>
</footer>
</body>
</html>
```
FILE: styles.css
```css
*, *::before, *::after { box-sizing: border-box; }
body {
  margin: 0; width: 1366px; height: 768px; overflow: hidden;
  background: #0a0a0a; color: #fff;
  font: 12px/16px "Open Sans", "DejaVu Sans", sans-serif;
}
svg { display: block; flex: none; overflow: visible; }
.defs { position: absolute; }
span, b, a, p, em, u { white-space: nowrap; }
em, u { font-style: normal; text-decoration: none; }
p { margin: 0; }

/* title bar */
.titlebar {
  position: relative; height: 48px; padding-left: 18px;
  display: grid; align-items: center; justify-items: start;
  grid-template-columns: 48px 48px 42px 32px 303px 380px 17px 195px 21px 15px 24px 15px 29px 29px 49px 69px 16px;
}
.title-strip {
  position: absolute; left: 563px; top: 0; width: 241px; height: 1px;
  background: linear-gradient(90deg, #2a2a2a 96px, #881798 96px, #881798 144px, #2a2a2a 144px);
}
.user { font-size: 11px; font-weight: 600; letter-spacing: -.3px; }
.search {
  width: 368px; height: 32px; border-radius: 3px; background: #1f1f1f; color: #a0a0a0;
  display: flex; align-items: center; justify-content: flex-end; gap: 14px; padding-right: 21px;
}
.search span { font-size: 13px; }
.doc { font-size: 11.600px; letter-spacing: -.2px; }
.dim { color: #555; }
.toggle {
  width: 42px; height: 20px; border: 1px solid #fff; border-radius: 10px; background: #292929;
  display: flex; justify-content: flex-end; align-items: center; padding-right: 2px;
}
.toggle b { width: 14px; height: 14px; border-radius: 50%; background: #fff; }
.autosave { font-size: 11.200px; }

/* ribbon tabs */
.tabs {
  height: 30px; padding-left: 12px; display: grid; align-items: center; justify-items: start;
  grid-template-columns: 89px 563px 69px 82px 54px 61px 54px 58px 107px 47px 127px 30px;
}
.tabs a { font-size: 12px; height: 24px; line-height: 25px; }
.tabs .latin { font-weight: 600; letter-spacing: -.4px; }
.tabs .on { font-size: 12.500px; font-weight: 700; border-bottom: 2px solid #4fb576; line-height: 24px; }
.share, .comments { height: 24px; border-radius: 4px; display: flex; align-items: center; }
.share { width: 81px; background: #36a15d; color: #0b2a18; padding-left: 3px; gap: 6px; font-size: 12.500px; }
.comments { width: 78px; background: #1f1f1f; border: 1px solid #6a6a6a; padding-left: 6px; gap: 4px; font-size: 12.500px; }

/* ribbon */
.ribbon {
  margin: 0 8px; height: 100px; border-radius: 8px; background: #292929;
  display: flex; font-size: 11px;
}
.group { position: relative; height: 90px; margin-top: 4px; border-left: 1px solid #636363; }
.group .body { height: 77px; display: flex; }
.label { position: absolute; left: 0; right: 0; top: 77px; text-align: center; line-height: 16px; font-size: 10.200px; }
.launcher { position: absolute; left: 3px; top: 82px; }
.g-collapse { width: 34px; border: 0; padding: 78px 0 0 8px; }
.g-addins { width: 81px; }
.g-edit { width: 161px; }
.g-cells { width: 96px; }
.g-styles { width: 172px; }
.g-number { width: 162px; }
.g-align { width: 304px; }
.g-font { width: 236px; }
.g-clip { width: 104px; }

.tall { display: flex; flex-direction: column; align-items: center; padding-top: 3px; }
.tall > span { height: 15px; line-height: 15px; font-size: 11px; }
.tall > svg:first-child { margin-bottom: 2px; }
.menu { display: flex; align-items: center; gap: 6px; }
.menu b { font-weight: 400; }
.g-edit .tall { width: 63px; }
.g-edit .tall.sort { width: 41px; }
.g-styles .body { padding-left: 4px; }
.g-styles .tall { width: 54px; }
.g-styles .t-format { width: 46px; }
.g-styles .t-cond { width: 64px; }
.three { display: flex; flex-direction: column; }
.three > div { height: 26px; display: grid; align-items: center; justify-items: start; }
.g-edit .three > div { grid-template-columns: 18px 16px; }
.g-edit .three { padding-left: 11px; }
.g-cells .three { padding-left: 17px; }
.g-cells .three > div { grid-template-columns: 10px 36px 20px; column-gap: 0; }
.g-cells .three span { justify-self: end; font-size: 11.500px; }
.g-cells .three > div svg:last-child { justify-self: end; }

.two { flex-direction: column; padding-top: 4px; }
.two > div { height: 32px; display: grid; grid-template-rows: 32px; align-items: center; justify-items: start; }
.sep { width: 1px; height: 24px; background: #5c5c5c; }
.sep.long { height: 62px; align-self: start; margin-top: 3px; }
.box {
  height: 24px; border: 1px solid #757575; border-radius: 4px;
  display: flex; align-items: center; justify-content: space-between;
  padding: 0 1px 0 1px; font-size: 12px; background: #292929;
}
.num-format { width: 146px; margin-left: 7px; }
.g-number .r2 { padding-left: 11px; grid-template-columns: 26px 22px 12px 21px 24px 20px 14px; }
.dec { display: flex; flex-direction: column; align-items: flex-end; color: #d0d0d0; width: 16px; }
.dec em { font-size: 8px; line-height: 9px; height: 9px; }
.dec .arr { display: flex; align-items: center; }
.sym { font-size: 18px; line-height: 22px; color: #d8d8d8; font-weight: 300; }
.g-align .r1 { padding-left: 35px; grid-template-columns: 64px 24px 9px 18px 21px 8px 14px 22px 3px 31px 26px 14px; }
.g-align .r2 { padding-left: 10px; grid-template-columns: 21px 67px 71px 27px 21px 7px 27px 26px 14px; }
.wrap-ic { color: #d0d0d0; display: flex; flex-direction: column; }
.wrap-ic em { font-size: 9.500px; line-height: 9px; height: 9px; display: flex; align-items: center; }
.orient { position: relative; width: 17px; height: 16px; color: #d8d8d8; }
.orient em { position: absolute; left: 0; top: -3px; font-size: 10px; transform: rotate(-45deg); }
.orient svg { position: absolute; left: 5px; top: 4px; }
.sel { width: 24px; height: 24px; border: 1px solid #9a9a9a; border-radius: 4px; background: #383838; display: grid; place-items: center; }
.g-font .r1 { padding-left: 14px; grid-template-columns: 24px 21px 49px 119px; }
.g-font .r2 { padding-left: 9px; grid-template-columns: 17px 24px 17px 22px 5px 17px 22px 5px 20px 27px 26px 10px; }
.fa { font-size: 16px; line-height: 22px; color: #d8d8d8; display: flex; gap: 1px; width: 18px; }
.fa svg { margin-top: 4px; }
.fa.sm { font-size: 14px; }
.g-font .box { width: 46px; padding-right: 4px; }
.g-font .box.fname { width: 119px; padding: 0 0 0 1px; justify-content: flex-start; gap: 5px; letter-spacing: -.25px; }
.fcol { width: 16px; height: 17px; border-bottom: 4px solid #f00; text-align: center; font-size: 14px; line-height: 12px; color: #d8d8d8; }
.fmt { font-size: 13px; color: #d8d8d8; }
.un { text-decoration: underline; }
.it { font-style: italic; font-family: "Liberation Serif"; font-size: 14px; }
.bo { font-weight: 700; }
.g-clip .three { padding-left: 10px; width: 58px; }
.g-clip .three > div { grid-template-columns: 17px 16px; }
.g-clip .three > div > svg:last-child { grid-column: 2; }
.g-clip .three .cut { margin-left: 2px; }
.g-clip .tall { width: 28px; }
.g-clip .tall > svg:last-child { margin-top: 5px; }
.g-clip .tall > span { margin-top: 1px; }

/* formula bar */
.formula { height: 40px; padding: 8px 8px 0; display: flex; }
.fbox { height: 25px; border: 1px solid #636363; border-radius: 4px; background: #292929; display: flex; align-items: center; font-size: 14px; }
.name { width: 102px; padding: 0 4px 0 6px; justify-content: space-between; }
.name span { font-size: 14px; letter-spacing: -.4px; }
.value span { font-size: 14.500px; letter-spacing: 0; }
.dots { margin: 7px 8px 0; }
.tools { width: 74px; padding-left: 6px; gap: 10px; }
.tools span { font: italic 700 17px/20px "Liberation Serif", serif; color: #ddd; }
.value { margin-left: 4px; width: 1150px; padding: 0 3px 0 11px; justify-content: space-between; }

/* worksheet */
.work { display: flex; height: 456px; }
.sheet { width: 1345px; height: 456px; overflow: hidden; border-right: 1px solid #555; }
.cols { display: grid; grid-template-columns: 26px repeat(16, 80px) 80px; height: 20px; border-bottom: 1px solid #8a8a8a; }
.cols b { font-weight: 400; font-size: 13px; line-height: 20px; text-align: center; border-right: 1px solid #444; color: #e0e0e0; }
.cols .cur { background: #666; color: #fff; border-bottom: 2px solid #217346; border-right-color: #aaa; height: 20px; }
.corner { border-right: 1px solid #777; background: linear-gradient(135deg, transparent 50%, #6a6a6a 50%) 9px 4px / 12px 12px no-repeat; }
.row {
  display: grid; grid-template-columns: 26px repeat(16, 80px) 38px; grid-template-rows: 100%; height: 20px;
  font: 11px/20px "Liberation Sans", Arial, sans-serif; color: #000;
  background:
    linear-gradient(#e0e0e0, #e0e0e0) 0 100% / 100% 1px no-repeat,
    repeating-linear-gradient(90deg, #fff 0 79px, #e0e0e0 79px 80px) 26px 0;
}
.row > b {
  grid-area: 1 / 1; background: #0a0a0a; color: #e0e0e0; font: 13px/18px "Open Sans", sans-serif;
  display: grid; place-items: center;
  border-right: 1px solid #777; border-bottom: 1px solid #555; overflow: hidden;
}
.row > .cur { background: #666; color: #fff; border-right: 2px solid #217346; }
.row p { grid-row: 1; background: #fff; padding-left: 2px; margin: 0 1px 1px 0; line-height: 21px; letter-spacing: -.1px; }
.row .grey { background: #c0c0c0; margin: 0; }
.row.full { background: #c0c0c0; }
.h21 { height: 21px; }
.h25 { height: 25px; }
.last { height: 28px; overflow: hidden; }
.c1-2 { grid-column: 2 / 4; } .c1-3 { grid-column: 2 / 5; } .c1-4 { grid-column: 2 / 6; }
.c1-8 { grid-column: 2 / 10; } .c1-15 { grid-column: 2 / 17; } .c2-3 { grid-column: 3 / 5; }
.c3-4 { grid-column: 4 / 6; } .c5 { grid-column: 6 / 7; } .c5-6 { grid-column: 6 / 8; }
.c6-8 { grid-column: 7 / 10; } .c9-10 { grid-column: 10 / 12; } .c9-11 { grid-column: 10 / 13; }
.c10 { grid-column: 11 / 12; } .c10-11 { grid-column: 11 / 13; } .c10-13 { grid-column: 11 / 15; }
.c13 { grid-column: 14 / 15; } .c15-16 { grid-column: 16 / 18; } .c17 { grid-column: 18 / 19; }
.row .big { font-size: 17px; -webkit-text-stroke: .5px #000; line-height: 20px; padding-left: 3px; letter-spacing: .34px; }
.row .t2 { letter-spacing: .8px; }
.row .bold { font-size: 11.500px; -webkit-text-stroke: .55px #000; letter-spacing: .64px; }
.over { position: relative; overflow: visible; }
.row .right { text-align: right; padding-right: 1px; letter-spacing: .4px; }
.row .etic { color: #808080; -webkit-text-stroke: .4px #808080; font-size: 10px; letter-spacing: -.45px; }
.row .huge { font-size: 20px; -webkit-text-stroke: .7px #000; line-height: 25px; letter-spacing: .25px; padding-left: 3px; }
.row .mid { font-size: 13.500px; -webkit-text-stroke: .5px #000; letter-spacing: .75px; padding-left: 3px; }
.row .egypt { padding-left: 10px; }
.row .low { line-height: 30px; }
.row .code { line-height: 24px; }
.row .active { position: relative; margin: 0; padding-left: 1px; }
.active::before { content: ""; position: absolute; left: -2px; top: -2px; width: 83px; height: 24px; border: 2px solid #217346; }
.active::after { content: ""; position: absolute; right: -3px; bottom: -3px; width: 6px; height: 6px; background: #217346; border: solid #fff; border-width: 1px 0 0 1px; }
.row .heads { display: grid; grid-template-columns: 525px 446px 145px 60px; padding: 21px 0 0 12px; overflow: hidden; }
.row .qhead { display: flex; flex-direction: column; padding: 8px 0 0 7px; overflow: hidden; }
.heads span, .qhead span { line-height: 14px; }
.qhead span + span { padding-left: 22px; line-height: 10px; }
.vscroll { width: 21px; display: flex; flex-direction: column; align-items: center; padding: 5px 0 0 1px; }
.up { border: 5px solid transparent; border-top: 0; border-bottom: 7px solid #999; }
.thumb { width: 9px; height: 167px; margin-top: 5px; border-radius: 5px; background: #999; }
.down { margin-top: 263px; border: 5px solid transparent; border-bottom: 0; border-top: 7px solid #999; }

/* sheet tabs */
.sheets {
  height: 33px; border-top: 1px solid #555; border-bottom: 1px solid #3c3c3c; padding-left: 28px;
  display: grid; align-items: center; justify-items: start;
  grid-template-columns: 33px 29px 35px 112px 14px 112px 14px 112px 5px 121px 14px 112px 10px 32px 36px 19px 500px;
  font-size: 14px;
}
.sheets span { letter-spacing: -.25px; }
.sheets i { width: 1px; height: 18px; }
.sheets > i { background: #555; }
.active-tab { align-self: start; width: 118px; height: 28px; background: #fff; color: #333; border-radius: 0 0 5px 5px; padding-left: 8px; font-weight: 600; }
.active-tab u { display: inline-block; border-bottom: 2px solid #107c41; height: 24px; line-height: 24px; letter-spacing: -.35px; width: 101px; }
.hscroll { width: 509px; height: 17px; border-radius: 9px; background: #141414; display: flex; align-items: center; padding-left: 5px; }
.sheets .left { width: 0; height: 0; border: 5px solid transparent; border-left: 0; border-right: 7px solid #999; }
.sheets .hthumb { width: 433px; height: 9px; margin-left: 5px; border-radius: 5px; background: #999; }
.sheets .rightarr { width: 0; height: 0; margin-left: 48px; border: 5px solid transparent; border-right: 0; border-left: 7px solid #999; }

/* status bar */
.status {
  height: 21px; background: #141414; padding: 0 0 2px 10px; display: grid; align-items: center; justify-items: start;
  grid-template-columns: 39px 14px 104px 28px 40px 27px 730px 305px 35px 30px; grid-template-rows: 19px;
  font-size: 11px;
}
.zoomv { letter-spacing: 0; }
.slider { width: 100px; height: 11px; background: linear-gradient(#888, #888) 0 5px / 100% 1px no-repeat; padding-left: 47px; }
.slider b { display: block; width: 5px; height: 11px; background: #aaa; }
.view-on { width: 40px; height: 19px; background: #222; display: grid; place-items: center; }
.a11y { font-weight: 700; font-size: 10.600px; }
.ready { font-size: 10.700px; }

/* taskbar */
.taskbar { height: 40px; background: #101010; display: flex; }
.start { width: 48px; display: grid; place-items: center; }
.tsearch { width: 288px; height: 40px; border: 1px solid #666; background: #3b3b3b; display: flex; align-items: center; padding-left: 11px; }
.tsearch span { font-size: 15px; color: #d0d0d0; margin-left: 11px; letter-spacing: -.52px; width: 175px; }
.apps { display: flex; margin-left: 2px; }
.apps div { width: 49px; height: 40px; display: grid; place-items: center; }
.run { background: linear-gradient(#f08ff2, #f08ff2) 50% 100% / 40px 2px no-repeat; }
.apps .open { background: linear-gradient(#f08ff2, #f08ff2) 50% 100% / 48px 2px no-repeat, linear-gradient(90deg, #333 44px, #2a2a2a 44px) 0 0 / 48px 40px no-repeat; }
.tray { margin-left: 123px; display: grid; align-items: center; justify-items: start; grid-template-columns: 21px 27px 32px 27px 70px 37px 2px; }
.clock { display: flex; flex-direction: column; align-items: center; font-size: 12px; line-height: 18px; letter-spacing: -.5px; width: 52px; }
.tray i { width: 1px; height: 40px; background: #666; }
```
